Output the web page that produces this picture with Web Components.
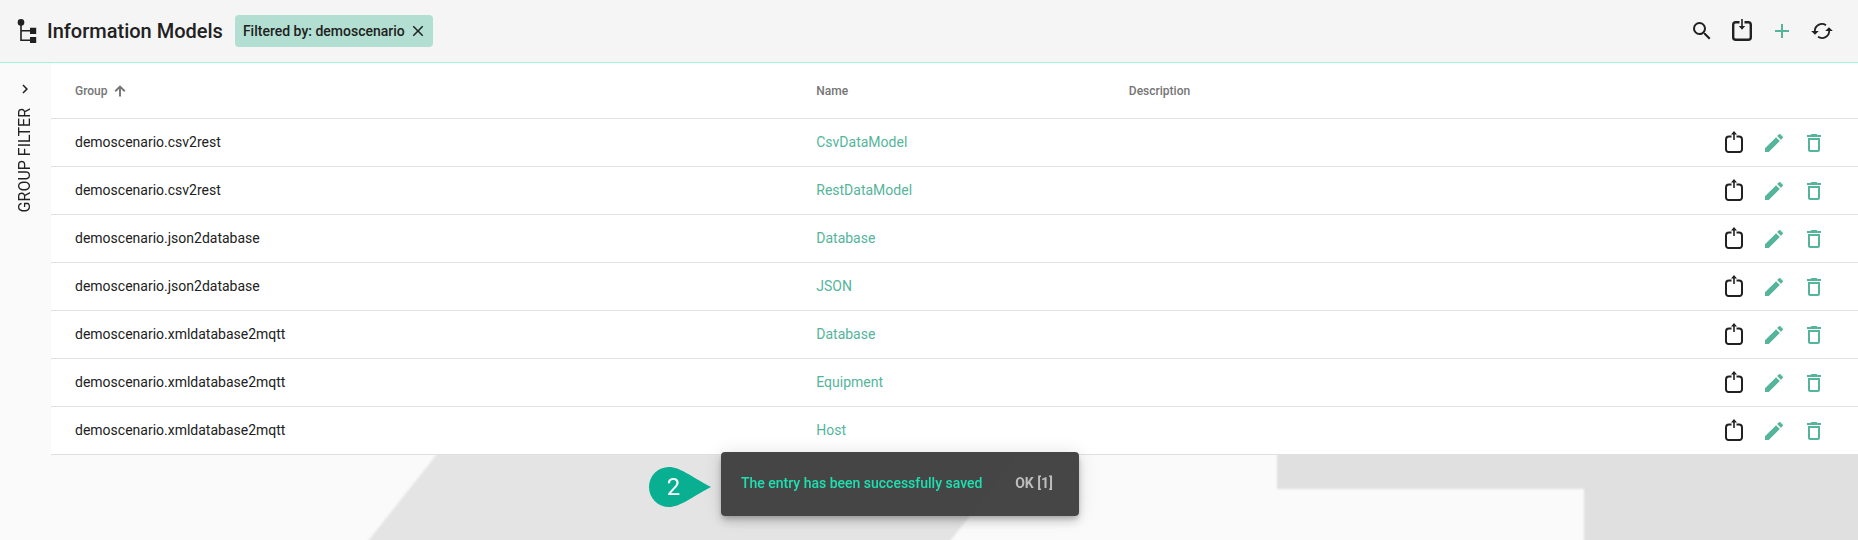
<!DOCTYPE html>
<html lang="en">
<head>
<meta charset="utf-8">
<meta name="viewport" content="width=device-width, initial-scale=1">
<title>Information Models</title>
<style>
    body {
        margin: 0;
        font-family: Roboto, "Liberation Sans", sans-serif;
        font-size: 14px;
        color: #212121;
        background: #fafafa;
    }
</style>
</head>
<body>
<models-page></models-page>

<script>
const ICONS = {
    tree: `<circle cx="5" cy="3.4" r="3.3"/><path d="M4.2 4h1.600v18H4.200zM4.500 11h10v1.500h-10zM4.500 20.500h10V22h-10zM14 8.700h6.200v6.200H14zM14 17.900h6.200v6.100H14z"/>`,
    close: `<path d="M19 6.41 17.59 5 12 10.59 6.41 5 5 6.41 10.59 12 5 17.59 6.41 19 12 13.41 17.59 19 19 17.59 13.41 12z"/>`,
    search: `<path d="M15.5 14h-.79l-.28-.27A6.471 6.471 0 0 0 16 9.5 6.5 6.5 0 1 0 9.5 16c1.61 0 3.09-.59 4.23-1.57l.27.28v.79l5 4.99L20.49 19l-4.99-5zm-6 0C7.01 14 5 11.99 5 9.5S7.01 5 9.5 5 14 7.01 14 9.5 11.99 14 9.5 14z"/>`,
    download: `<path fill="none" stroke="currentColor" stroke-width="2.4" d="M9.500 3.200H5.800A2.600 2.600 0 0 0 3.200 5.800v12.400A2.600 2.600 0 0 0 5.800 20.800h12.400A2.600 2.600 0 0 0 20.800 18.200V5.800A2.600 2.600 0 0 0 18.200 3.200H14.500"/><path d="M11.200 0h1.600v7H15.200L12 10.800 8.800 7h2.400z"/>`,
    add: `<path d="M19 13h-6v6h-2v-6H5v-2h6V5h2v6h6v2z"/>`,
    refresh: `<g fill="none" stroke="currentColor" stroke-width="1.800"><path d="M4.800 12.500A7.200 7.200 0 0 1 16 6.200"/><path d="M19.200 11.500A7.200 7.200 0 0 1 8 17.800"/></g><path d="M1.200 12h7.600L5 15.800zM15.200 12h7.600L19 8.200z"/>`,
    share: `<path fill="none" stroke="currentColor" stroke-width="2" d="M9.500 5.500H7a3 3 0 0 0-3 3v10A2.500 2.500 0 0 0 6.500 21h11a2.500 2.500 0 0 0 2.500-2.500V8.500a3 3 0 0 0-3-3h-2.500"/><path d="M11.200 2.500h1.600V9h-1.600zM12 0 15 3.400H9z"/>`,
    edit: `<path d="M3 17.250V21h3.750L17.810 9.940l-3.750-3.750L3 17.250zM20.710 7.040a1 1 0 0 0 0-1.410l-2.340-2.340a1 1 0 0 0-1.410 0l-1.830 1.830 3.750 3.750 1.830-1.830z"/>`,
    trash: `<path d="M6 19c0 1.100.9 2 2 2h8c1.100 0 2-.9 2-2V7H6v12zM8 9h8v10H8V9zm7.500-5-1-1h-5l-1 1H5v2h14V4z"/>`,
    chevron: `<path d="M10 6 8.590 7.410 13.170 12l-4.580 4.590L10 18l6-6z"/>`,
    arrow: `<path fill="none" stroke="currentColor" stroke-width="3.800" d="M12 23V4M2.500 12.500 12 3l9.500 9.500"/>`
}

class AppIcon extends HTMLElement {
    connectedCallback() {
        const size = this.getAttribute("size") ?? "24"
        this.attachShadow({ mode: "open" }).innerHTML = `
            <style>
                :host { display: inline-flex; flex: none; }
                svg { width: ${size}px; height: ${size}px; fill: currentColor; }
            </style>
            <svg viewBox="0 0 24 24" aria-hidden="true">${ICONS[this.getAttribute("name")]}</svg>
        `
    }
}

class IconButton extends HTMLElement {
    connectedCallback() {
        this.attachShadow({ mode: "open" }).innerHTML = `
            <style>
                :host { display: inline-flex; flex: none; }
                button {
                    display: flex;
                    align-items: center;
                    justify-content: center;
                    width: 40px;
                    height: 40px;
                    padding: 0;
                    border: 0;
                    background: none;
                    color: inherit;
                    cursor: pointer;
                }
            </style>
            <button type="button" aria-label="${this.getAttribute("label")}">
                <app-icon name="${this.getAttribute("icon")}" size="${this.getAttribute("size") ?? "24"}"></app-icon>
            </button>
        `
    }
}

class FilterChip extends HTMLElement {
    connectedCallback() {
        this.attachShadow({ mode: "open" }).innerHTML = `
            <style>
                :host {
                    display: inline-flex;
                    align-items: center;
                    gap: 4px;
                    height: 32px;
                    padding: 0 6px 0 8px;
                    box-sizing: border-box;
                    border-radius: 4px;
                    background: #b2dfd1;
                    font-weight: 500;
                }
                button {
                    display: flex;
                    padding: 0;
                    border: 0;
                    background: none;
                    color: inherit;
                    cursor: pointer;
                }
            </style>
            <slot></slot>
            <button type="button" aria-label="Remove filter"><app-icon name="close" size="18"></app-icon></button>
        `
    }
}

class PageToolbar extends HTMLElement {
    connectedCallback() {
        this.attachShadow({ mode: "open" }).innerHTML = `
            <style>
                :host { display: block; }
                header {
                    display: flex;
                    align-items: center;
                    height: 62px;
                    padding: 0 16px;
                    background: #f5f5f5;
                    border-bottom: 1px solid #a1f5dd;
                }
                h1 {
                    margin: 0 12px 0 7px;
                    font-size: 20px;
                    font-weight: 500;
                    line-height: 32px;
                }
                nav { display: flex; margin-left: auto; }
                .accent { color: #55b59b; }
            </style>
            <header>
                <app-icon name="tree"></app-icon>
                <h1>${this.getAttribute("heading")}</h1>
                <slot></slot>
                <nav>
                    <icon-button icon="search" label="Search"></icon-button>
                    <icon-button icon="download" label="Import"></icon-button>
                    <icon-button class="accent" icon="add" label="Add"></icon-button>
                    <icon-button icon="refresh" label="Refresh"></icon-button>
                </nav>
            </header>
        `
    }
}

class GroupFilter extends HTMLElement {
    connectedCallback() {
        this.attachShadow({ mode: "open" }).innerHTML = `
            <style>
                :host { display: block; flex: none; width: 51px; background: #fafafa; }
                button {
                    display: flex;
                    flex-direction: column;
                    align-items: center;
                    gap: 10px;
                    width: 100%;
                    padding: 17px 2px 0 0;
                    border: 0;
                    background: none;
                    color: inherit;
                    font: inherit;
                    font-size: 16px;
                    line-height: 24px;
                    cursor: pointer;
                }
                span { writing-mode: vertical-rl; transform: rotate(180deg); }
            </style>
            <button type="button" aria-expanded="false">
                <app-icon name="chevron" size="18"></app-icon>
                <span>GROUP FILTER</span>
            </button>
        `
    }
}

class ModelTable extends HTMLElement {
    static rows = [
        ["demoscenario.csv2rest", "CsvDataModel"],
        ["demoscenario.csv2rest", "RestDataModel"],
        ["demoscenario.json2database", "Database"],
        ["demoscenario.json2database", "JSON"],
        ["demoscenario.xmldatabase2mqtt", "Database"],
        ["demoscenario.xmldatabase2mqtt", "Equipment"],
        ["demoscenario.xmldatabase2mqtt", "Host"]
    ]

    renderRow([group, name]) {
        return `
            <tr>
                <td>${group}</td>
                <td><a href="#">${name}</a></td>
                <td></td>
                <td>
                    <div class="actions">
                        <icon-button icon="share" label="Export ${name}"></icon-button>
                        <icon-button class="accent" icon="edit" label="Edit ${name}"></icon-button>
                        <icon-button class="accent" icon="trash" label="Delete ${name}"></icon-button>
                    </div>
                </td>
            </tr>
        `
    }

    connectedCallback() {
        this.attachShadow({ mode: "open" }).innerHTML = `
            <style>
                :host { display: block; flex: 1; min-width: 0; }
                table {
                    width: 100%;
                    table-layout: fixed;
                    border-spacing: 0;
                    background: #fff;
                }
                th, td {
                    box-sizing: border-box;
                    height: 48px;
                    padding: 0 0 2px;
                    border-bottom: 1px solid #e0e0e0;
                    text-align: left;
                }
                th {
                    height: 56px;
                    padding: 0;
                    font-size: 12px;
                    font-weight: 500;
                    color: #757575;
                }
                th:first-child, td:first-child { padding-left: 24px; }
                td:last-child { padding: 0 24px 0 0; }
                .group { width: 42.35%; }
                .name { width: 17.3%; }
                th button {
                    display: flex;
                    align-items: center;
                    gap: 6px;
                    padding: 0;
                    border: 0;
                    background: none;
                    color: inherit;
                    font: inherit;
                    cursor: pointer;
                }
                a, .accent { color: #55b59b; text-decoration: none; }
                .actions { display: flex; justify-content: flex-end; }
            </style>
            <table>
                <thead>
                    <tr>
                        <th class="group" aria-sort="ascending">
                            <button type="button">Group <app-icon name="arrow" size="12"></app-icon></button>
                        </th>
                        <th class="name">Name</th>
                        <th>Description</th>
                        <th aria-label="Actions"></th>
                    </tr>
                </thead>
                <tbody>${ModelTable.rows.map(row => this.renderRow(row)).join("")}</tbody>
            </table>
        `
    }
}

class PageBackdrop extends HTMLElement {
    connectedCallback() {
        this.attachShadow({ mode: "open" }).innerHTML = `
            <style>
                :host { position: absolute; inset: 0; z-index: -1; }
                svg { display: block; width: 100%; height: 100%; }
            </style>
            <svg viewBox="0 0 1858 540" preserveAspectRatio="xMidYMid slice" aria-hidden="true">
                <filter id="soft"><feGaussianBlur stdDeviation="1"/></filter>
                <g filter="url(#soft)">
                    <path fill="#e4e4e4" d="M460 425H1042L927 570H345z"/>
                    <path fill="#e0e0e0" d="M1277 425H1890V570H1584V489H1277z"/>
                </g>
            </svg>
        `
    }
}

class StepMarker extends HTMLElement {
    connectedCallback() {
        this.attachShadow({ mode: "open" }).innerHTML = `
            <style>
                :host { display: grid; flex: none; color: #fff; font-size: 24px; line-height: 40px; }
                svg, span { grid-area: 1 / 1; }
                svg { width: 62px; height: 40px; }
                span { width: 49px; text-align: center; }
            </style>
            <svg viewBox="0 0 62 40" aria-hidden="true">
                <path fill="#08af91" d="M20 0C31 0 41 9 62 20 41 31 31 40 20 40A20 20 0 0 1 20 0z"/>
            </svg>
            <span><slot></slot></span>
        `
    }
}

class SnackBar extends HTMLElement {
    connectedCallback() {
        this.attachShadow({ mode: "open" }).innerHTML = `
            <style>
                :host {
                    display: flex;
                    align-items: center;
                    justify-content: space-between;
                    gap: 24px;
                    min-width: 358px;
                    min-height: 64px;
                    padding: 0 26px 2px 20px;
                    box-sizing: border-box;
                    border-radius: 4px;
                    background: rgba(62, 62, 62, .96);
                    box-shadow: 0 3px 5px -1px rgba(0, 0, 0, .2), 0 6px 10px rgba(0, 0, 0, .14), 0 1px 18px rgba(0, 0, 0, .12);
                    color: #1de0b0;
                    font-weight: 500;
                    white-space: nowrap;
                }
                button {
                    padding: 0;
                    border: 0;
                    background: none;
                    color: #bdbdbd;
                    font: inherit;
                    font-weight: 700;
                    cursor: pointer;
                }
            </style>
            <span role="status"><slot></slot></span>
            <button type="button">${this.getAttribute("action")}</button>
        `
    }
}

class ModelsPage extends HTMLElement {
    connectedCallback() {
        this.attachShadow({ mode: "open" }).innerHTML = `
            <style>
                :host { display: flex; flex-direction: column; position: relative; z-index: 0; min-height: 100vh; }
                main { display: flex; flex: 1; }
                .overlay {
                    position: fixed;
                    right: calc(50% - 150px);
                    bottom: 24px;
                    display: flex;
                    align-items: center;
                    gap: 10px;
                }
                step-marker { padding-top: 6px; }
            </style>
            <page-backdrop></page-backdrop>
            <page-toolbar heading="Information Models">
                <filter-chip>Filtered by: demoscenario</filter-chip>
            </page-toolbar>
            <main>
                <group-filter></group-filter>
                <model-table></model-table>
            </main>
            <div class="overlay">
                <step-marker>2</step-marker>
                <snack-bar action="OK [1]">The entry has been successfully saved</snack-bar>
            </div>
        `
    }
}

customElements.define("app-icon", AppIcon)
customElements.define("icon-button", IconButton)
customElements.define("filter-chip", FilterChip)
customElements.define("page-toolbar", PageToolbar)
customElements.define("group-filter", GroupFilter)
customElements.define("model-table", ModelTable)
customElements.define("page-backdrop", PageBackdrop)
customElements.define("step-marker", StepMarker)
customElements.define("snack-bar", SnackBar)
customElements.define("models-page", ModelsPage)
</script>
</body>
</html>
